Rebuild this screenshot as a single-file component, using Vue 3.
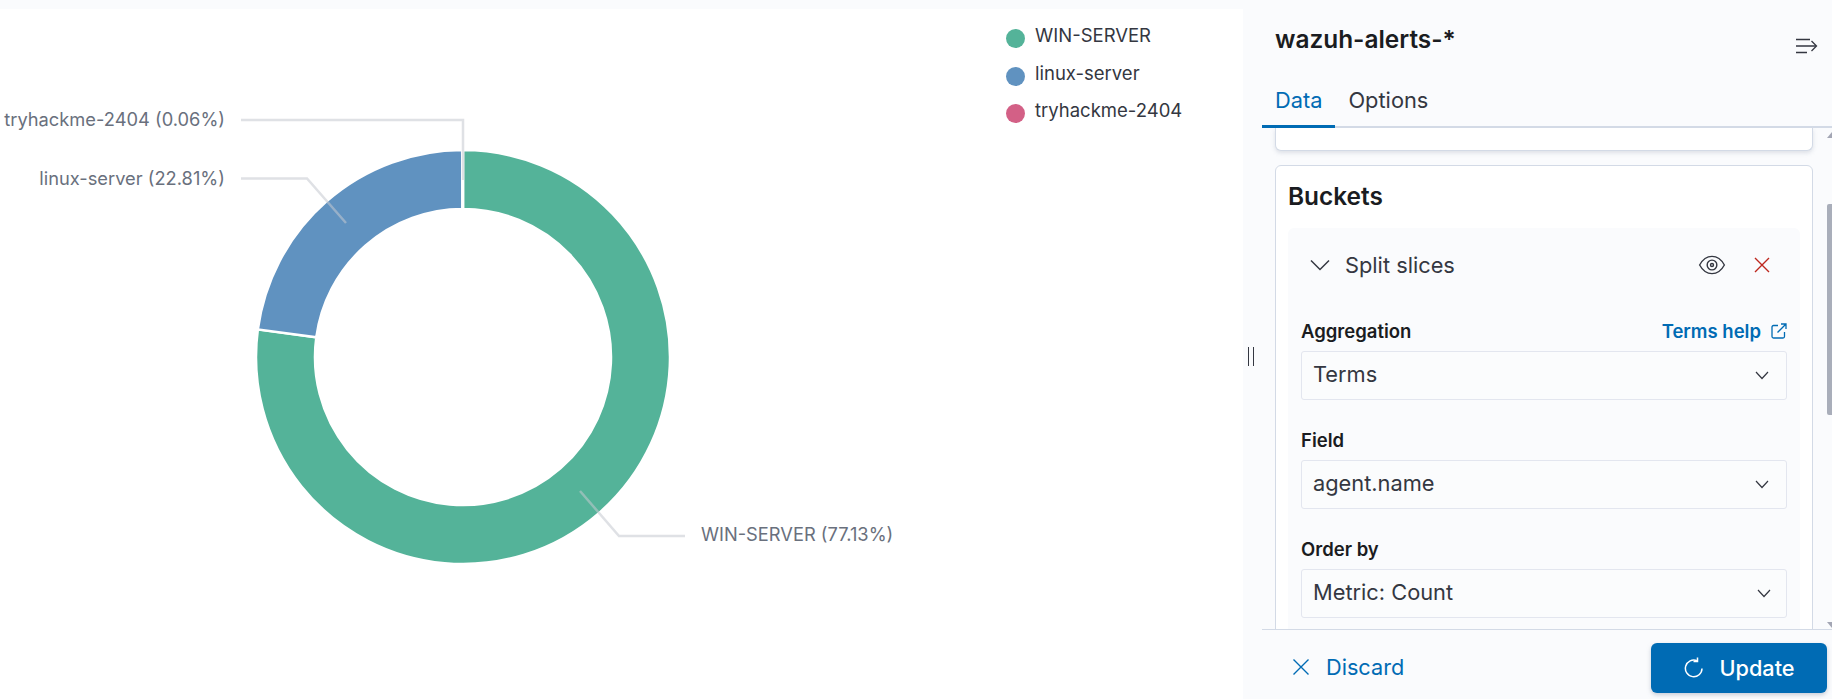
<template>
  <div class="page">
    <!-- Pie chart with callout labels and legend -->
    <div class="chart">
      <svg class="donut" width="1006" height="690" viewBox="0 9 1006 690">
        <path
          v-for="slice in arcs"
          :key="slice.name"
          :d="slice.d"
          :fill="slice.color"
          stroke="#fff"
          stroke-width="2.500"
        />
        <polyline
          v-for="line in callouts"
          :key="line.label"
          :points="line.points"
          class="callout"
        />
        <text
          v-for="line in callouts"
          :key="line.label + '-text'"
          :x="line.x"
          :y="line.y"
          :text-anchor="line.anchor"
          class="callout-text"
        >{{ line.label }}</text>
      </svg>
      <ul class="legend">
        <li v-for="slice in slices" :key="slice.name" class="legend-item">
          <span class="legend-dot" :style="{ background: slice.color }"></span>
          <span class="legend-name">{{ slice.name }}</span>
        </li>
      </ul>
    </div>

    <!-- Visualization editor sidebar -->
    <aside class="sidebar">
      <div class="resizer"></div>
      <header class="side-head">
        <div class="title-row">
          <h2 class="title">wazuh-alerts-*</h2>
          <svg class="collapse" width="24" height="18" viewBox="0 0 24 18" fill="none" stroke="#343741" stroke-width="1.3">
            <path d="M1 2.5h14M1 9h20M1 15.5h11" />
            <path d="M16.5 4l5 5-5 5" />
          </svg>
        </div>
        <div class="tabs">
          <div class="tab active">Data</div>
          <div class="tab">Options</div>
        </div>
      </header>

      <div class="scroll">
        <div class="card card-cut"></div>
        <div class="card buckets">
          <h3 class="buckets-title">Buckets</h3>
          <div class="accordion">
            <div class="acc-head">
              <svg class="acc-chevron" width="20" height="12" viewBox="0 0 20 12" fill="none" stroke="#343741" stroke-width="1.5">
                <path d="M1 1.5l9 9 9-9" />
              </svg>
              <span class="acc-name">Split slices</span>
              <svg class="eye" width="28" height="22" viewBox="0 0 26 20" fill="none" stroke="#343741" stroke-width="1.3">
                <path d="M1.5 10C4.5 4.5 8.5 2 13 2s8.5 2.5 11.500 8c-3 5.500-7 8-11.500 8S4.500 15.500 1.500 10z" />
                <circle cx="13" cy="10" r="4.500" />
                <circle cx="13" cy="10" r="1.400" />
              </svg>
              <svg class="remove" width="16" height="16" viewBox="0 0 16 16" fill="none" stroke="#bd271e" stroke-width="1.400">
                <path d="M1 1l14 14M15 1L1 15" />
              </svg>
            </div>
            <div v-for="field in fields" :key="field.label" class="field">
              <div class="field-label">
                <label>{{ field.label }}</label>
                <a v-if="field.help" class="help">
                  {{ field.help }}
                  <svg width="16" height="16" viewBox="0 0 16 16" fill="none" stroke="#006bb4" stroke-width="1.300">
                    <path d="M7 2.500H2.500a1.500 1.500 0 0 0-1.500 1.500v9.500a1.500 1.500 0 0 0 1.500 1.500H12a1.500 1.500 0 0 0 1.500-1.500V9" />
                    <path d="M6.500 9.500L15 1M10 1h5v5" />
                  </svg>
                </a>
              </div>
              <div class="select">
                <span>{{ field.value }}</span>
                <svg :class="{ shifted: field.shifted }" width="14" height="9" viewBox="0 0 14 9" fill="none" stroke="#343741" stroke-width="1.200">
                  <path d="M1 1l6 6.500L13 1" />
                </svg>
              </div>
            </div>
          </div>
        </div>
        <div class="scrollbar">
          <span class="arrow-up"></span>
          <span class="thumb"></span>
          <span class="arrow-down"></span>
        </div>
      </div>

      <footer class="side-foot">
        <a class="discard">
          <svg width="18" height="18" viewBox="0 0 18 18" fill="none" stroke="#006bb4" stroke-width="1.400">
            <path d="M1.500 1.500l15 15M16.500 1.500l-15 15" />
          </svg>
          Discard
        </a>
        <button class="update">
          <svg width="20" height="22" viewBox="0 0 20 22" fill="none" stroke="#fff" stroke-width="1.500">
            <path d="M13 3.800A8.300 8.300 0 1 0 18 11.500" />
            <path d="M13.500 0.500v4h-4" />
          </svg>
          Update
        </button>
      </footer>
    </aside>
  </div>
</template>

<script setup>
import { computed } from 'vue'

const slices = [
  { name: 'WIN-SERVER', pct: 77.13, color: '#54b399' },
  { name: 'linux-server', pct: 22.81, color: '#6092c0' },
  { name: 'tryhackme-2404', pct: 0.06, color: '#d36086' },
]

const CX = 463
const CY = 357
const OUTER = 207
const INNER = 148

function point(r, turn) {
  const a = turn * 2 * Math.PI
  return `${(CX + r * Math.sin(a)).toFixed(2)} ${(CY - r * Math.cos(a)).toFixed(2)}`
}

// Ring segments, clockwise from 12 o'clock
const arcs = computed(() => {
  let start = 0
  return slices.map((slice) => {
    const end = start + slice.pct / 100
    const large = end - start > 0.5 ? 1 : 0
    const d = [
      `M${point(OUTER, start)}`,
      `A${OUTER} ${OUTER} 0 ${large} 1 ${point(OUTER, end)}`,
      `L${point(INNER, end)}`,
      `A${INNER} ${INNER} 0 ${large} 0 ${point(INNER, start)}`,
      'Z',
    ].join(' ')
    start = end
    return { ...slice, d }
  })
})

const callouts = [
  { label: 'tryhackme-2404 (0.06%)', points: '241,120 463,120 463,180', x: 225, y: 126, anchor: 'end' },
  { label: 'linux-server (22.81%)', points: '241,178.500 307,178.500 346,223', x: 225, y: 185, anchor: 'end' },
  { label: 'WIN-SERVER (77.13%)', points: '580,491 619,536 685,536', x: 701, y: 541, anchor: 'start' },
]

const fields = [
  { label: 'Aggregation', value: 'Terms', help: 'Terms help' },
  { label: 'Field', value: 'agent.name' },
  { label: 'Order by', value: 'Metric: Count', shifted: true },
]
</script>

<style>
html,
body {
  margin: 0;
  background: #fafbfd;
}
</style>

<style scoped>
.page {
  display: flex;
  width: 1832px;
  height: 699px;
  overflow: hidden;
  font-family: Inter, "Noto Sans", sans-serif;
  color: #343741;
  background: #fafbfd;
}

.chart {
  display: flex;
  width: 1243px;
  margin-top: 9px;
  background: #fff;
}

.donut {
  flex: none;
  display: block;
}

.callout {
  fill: none;
  stroke: #c4c8d0;
  stroke-opacity: 0.55;
  stroke-width: 2.500;
}

.callout-text {
  font-size: 18.300px;
  fill: #69707d;
}

.legend {
  list-style: none;
  margin: 0;
  padding: 14px 0 0;
}

.legend-item {
  display: flex;
  align-items: flex-start;
  gap: 10px;
  height: 37.500px;
}

.legend-dot {
  width: 19px;
  height: 19px;
  border-radius: 50%;
  margin-top: 6px;
}

.legend-name {
  font-size: 18.500px;
  line-height: 24px;
}

.sidebar {
  position: relative;
  display: flex;
  flex-direction: column;
  width: 589px;
  padding-left: 19px;
  box-sizing: border-box;
}

.resizer {
  position: absolute;
  left: 5px;
  top: 347px;
  width: 4px;
  height: 19px;
  border-left: 1.500px solid #343741;
  border-right: 1.500px solid #343741;
}

.title-row {
  display: flex;
  justify-content: space-between;
  align-items: flex-start;
  height: 81px;
  padding: 0 13px 0 13px;
}

.title {
  margin: 24px 0 0;
  font-size: 24.400px;
  line-height: 30px;
  font-weight: 600;
  color: #1a1c21;
}

.collapse {
  margin-top: 37px;
}

.tabs {
  display: flex;
  height: 47px;
  box-sizing: border-box;
  border-bottom: 2px solid #d3dae6;
}

.tab {
  height: 47px;
  box-sizing: border-box;
  padding: 7px 13px 0;
  font-size: 21.800px;
  line-height: 24px;
  color: #343741;
}

.tab.active {
  color: #006bb4;
  border-bottom: 3px solid #006bb4;
}

.scroll {
  position: relative;
  flex: 1;
  min-height: 0;
  overflow: hidden;
  padding: 0 19px 0 13px;
}

.card {
  background: #fff;
  border: 1px solid #d3dae6;
  border-radius: 6px;
}

.card-cut {
  height: 22px;
  border-top: none;
  border-radius: 0 0 6px 6px;
  box-shadow: 0 2px 4px rgba(152, 162, 179, 0.3);
  margin-bottom: 14px;
}

.buckets {
  padding: 14px 12px 0;
}

.buckets-title {
  margin: 0 0 16px;
  font-size: 24.400px;
  line-height: 32px;
  font-weight: 600;
  color: #1a1c21;
}

.accordion {
  background: #fafbfd;
  border-radius: 6px;
  padding: 0 12px 40px 13px;
}

.acc-head {
  display: flex;
  align-items: center;
  height: 74px;
  margin-bottom: 19px;
  padding-left: 9px;
}

.acc-chevron {
  flex: none;
}

.acc-name {
  flex: 1;
  margin-left: 15px;
  font-size: 21.800px;
}

.eye {
  margin-right: 28px;
}

.remove {
  margin-right: 18px;
}

.field {
  margin-bottom: 30px;
}

.field-label {
  display: flex;
  justify-content: space-between;
  align-items: center;
  width: 486px;
  height: 20px;
  margin-bottom: 10px;
  font-size: 18.500px;
  font-weight: 600;
  color: #1a1c21;
}

.help {
  display: flex;
  align-items: center;
  gap: 10px;
  color: #006bb4;
}

.select {
  display: flex;
  justify-content: space-between;
  align-items: center;
  width: 486px;
  height: 49px;
  box-sizing: border-box;
  padding: 0 17px 3px 11px;
  background: #fbfcfd;
  border: 1px solid #e3e6ef;
  border-radius: 3px;
  font-size: 21.800px;
  color: #343741;
}

.select svg {
  margin-top: 3px;
}

.select .shifted {
  margin-right: -2px;
}

.scrollbar {
  position: absolute;
  top: 0;
  right: 0;
  bottom: 0;
  width: 5px;
}

.arrow-up {
  position: absolute;
  top: 4px;
  left: 0;
  border: 5px solid transparent;
  border-top: none;
  border-bottom: 6px solid #a3a6b4;
}

.thumb {
  position: absolute;
  top: 76px;
  left: 0;
  width: 5px;
  height: 211px;
  background: #a9aeba;
  border-radius: 2px 0 0 2px;
}

.arrow-down {
  position: absolute;
  bottom: 1px;
  left: 0;
  border: 5px solid transparent;
  border-bottom: none;
  border-top: 6px solid #a3a6b4;
}

.side-foot {
  display: flex;
  justify-content: space-between;
  align-items: flex-start;
  height: 70px;
  box-sizing: border-box;
  border-top: 1px solid #d3dae6;
  padding: 13px 5px 0 30px;
}

.discard {
  display: flex;
  align-items: center;
  gap: 16px;
  margin-top: 10px;
  font-size: 21.700px;
  line-height: 28px;
  color: #006bb4;
}

.update {
  display: flex;
  align-items: center;
  justify-content: center;
  gap: 15px;
  width: 176px;
  height: 50px;
  padding-right: 5px;
  border: none;
  border-radius: 6px;
  background: #006bb4;
  color: #fff;
  font-family: inherit;
  font-size: 21.700px;
  font-weight: 500;
  box-shadow: 0 2px 4px rgba(152, 162, 179, 0.5);
}
</style>
